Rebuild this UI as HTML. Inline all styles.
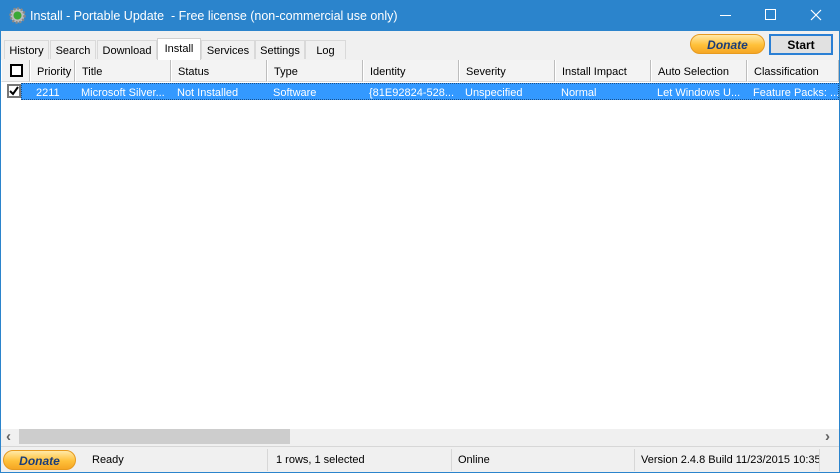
<!DOCTYPE html>
<html><head><style>
*{margin:0;padding:0;box-sizing:border-box}
body{width:840px;height:473px;overflow:hidden;background:#f0f0f0;font-family:"Liberation Sans",sans-serif;font-size:11px;color:#000;position:relative}
.abs{position:absolute}
#title{left:0;top:0;width:840px;height:31px;background:#2b84cc;color:#fff;font-size:12.5px}
#frame{left:0;top:31px;width:840px;height:442px;border:1px solid #2b84cc;border-top:none}
.tab{position:absolute;top:40px;height:19px;border:1px solid #d9d9d9;border-bottom:none;background:#f0f0f0;padding:4px 0 0 0;text-align:center}
.hd{position:absolute;top:60px;height:22px;background:#f3f3f3;border-right:1px solid #bdbdbd;border-left:1px solid #fff;border-bottom:1px solid #d8d8d8;padding:6px 0 0 6px;white-space:nowrap}
.cell{position:absolute;top:83px;height:17px;color:#fff;padding:4px 0 0 6px;white-space:nowrap}
.btn{position:absolute;border-radius:11px;background:linear-gradient(#ffe9a8,#ffc13a 55%,#f5a623);border:1px solid #e69a1f;color:#1b3d79;font-weight:bold;font-style:italic;text-align:center}
</style></head><body>
<div id="title" class="abs">
 <svg class="abs" style="left:9px;top:7px" width="17" height="17" viewBox="0 0 17 17"><circle cx="8.5" cy="8.5" r="7" fill="#bbb" stroke="#888" stroke-dasharray="2 1.6" stroke-width="2.5"/><circle cx="8.5" cy="8.5" r="4" fill="#3aa836"/></svg>
 <div class="abs" style="left:30px;top:9px">Install - Portable Update &nbsp;- Free license (non-commercial use only)</div>
 <div class="abs" style="left:720px;top:15px;width:11px;height:1px;background:#fff"></div>
 <div class="abs" style="left:765px;top:9px;width:11px;height:11px;border:1px solid #fff"></div>
 <svg class="abs" style="left:810px;top:9px" width="12" height="12"><path d="M1 1L11 11M11 1L1 11" stroke="#fff" stroke-width="1.2"/></svg>
</div>
<div id="frame" class="abs"></div>
<div class="tab" style="left:4px;width:45px">History</div>
<div class="tab" style="left:50px;width:46px">Search</div>
<div class="tab" style="left:97px;width:60px">Download</div>
<div class="tab" style="left:157px;width:44px;top:38px;height:22px;background:#fff;border-color:#d0d0d0">Install</div>
<div class="tab" style="left:201px;width:54px">Services</div>
<div class="tab" style="left:255px;width:50px">Settings</div>
<div class="tab" style="left:305px;width:41px">Log</div>
<div class="btn" style="left:690px;top:34px;width:75px;height:20px;padding-top:3px;font-size:12px">Donate</div>
<div class="abs" style="left:769px;top:34px;width:64px;height:21px;border:2px solid #2a7fd4;background:#e1e1e1;text-align:center;font-size:12px;padding-top:2px;font-weight:bold">Start</div>
<div class="abs" style="left:1px;top:60px;width:838px;height:369px;background:#fff"></div>
<div class="hd" style="left:1px;width:29px;padding:0"><div class="abs" style="left:8px;top:4px;width:13px;height:13px;border:2px solid #000;background:#fff"></div></div>
<div class="hd" style="left:30px;width:45px">Priority</div>
<div class="hd" style="left:75px;width:96px">Title</div>
<div class="hd" style="left:171px;width:96px">Status</div>
<div class="hd" style="left:267px;width:96px">Type</div>
<div class="hd" style="left:363px;width:96px">Identity</div>
<div class="hd" style="left:459px;width:96px">Severity</div>
<div class="hd" style="left:555px;width:96px">Install Impact</div>
<div class="hd" style="left:651px;width:96px">Auto Selection</div>
<div class="hd" style="left:747px;width:92px">Classification</div>
<div class="abs" style="left:21px;top:83px;width:818px;height:17px;background:#3399ff;border:1px dotted #1a4f88"></div>
<div class="abs" style="left:7px;top:84px;width:14px;height:14px;border:2px solid #777;background:#fff"><svg width="10" height="10" style="position:absolute;left:0;top:0"><path d="M1 5L4 8L9 1" stroke="#000" stroke-width="2" fill="none"/></svg></div>
<div class="cell" style="left:30px">2211</div>
<div class="cell" style="left:75px">Microsoft Silver...</div>
<div class="cell" style="left:171px">Not Installed</div>
<div class="cell" style="left:267px">Software</div>
<div class="cell" style="left:363px">{81E92824-528...</div>
<div class="cell" style="left:459px">Unspecified</div>
<div class="cell" style="left:555px">Normal</div>
<div class="cell" style="left:651px">Let Windows U...</div>
<div class="cell" style="left:747px">Feature Packs: ...</div>
<div class="abs" style="left:1px;top:429px;width:838px;height:16px;background:#f0f0f0"></div>
<div class="abs" style="left:19px;top:429px;width:271px;height:15px;background:#cdcdcd"></div>
<div class="abs" style="left:6px;top:428px;color:#606060;font-size:15px;font-weight:bold">‹</div>
<div class="abs" style="left:825px;top:428px;color:#606060;font-size:15px;font-weight:bold">›</div>
<div class="abs" style="left:1px;top:446px;width:838px;height:1px;background:#d7d7d7"></div>
<div class="btn" style="left:3px;top:450px;width:73px;height:20px;padding-top:3px;font-size:12px">Donate</div>
<div class="abs" style="left:92px;top:454px">Ready</div>
<div class="abs" style="left:267px;top:449px;width:1px;height:22px;background:#d7d7d7"></div>
<div class="abs" style="left:276px;top:454px">1 rows, 1 selected</div>
<div class="abs" style="left:451px;top:449px;width:1px;height:22px;background:#d7d7d7"></div>
<div class="abs" style="left:458px;top:454px">Online</div>
<div class="abs" style="left:634px;top:449px;width:1px;height:22px;background:#d7d7d7"></div>
<div class="abs" style="left:641px;top:454px;width:178px;overflow:hidden;white-space:nowrap">Version 2.4.8 Build 11/23/2015 10:35</div>
<div class="abs" style="left:819px;top:449px;width:1px;height:22px;background:#d7d7d7"></div>
</body></html>
